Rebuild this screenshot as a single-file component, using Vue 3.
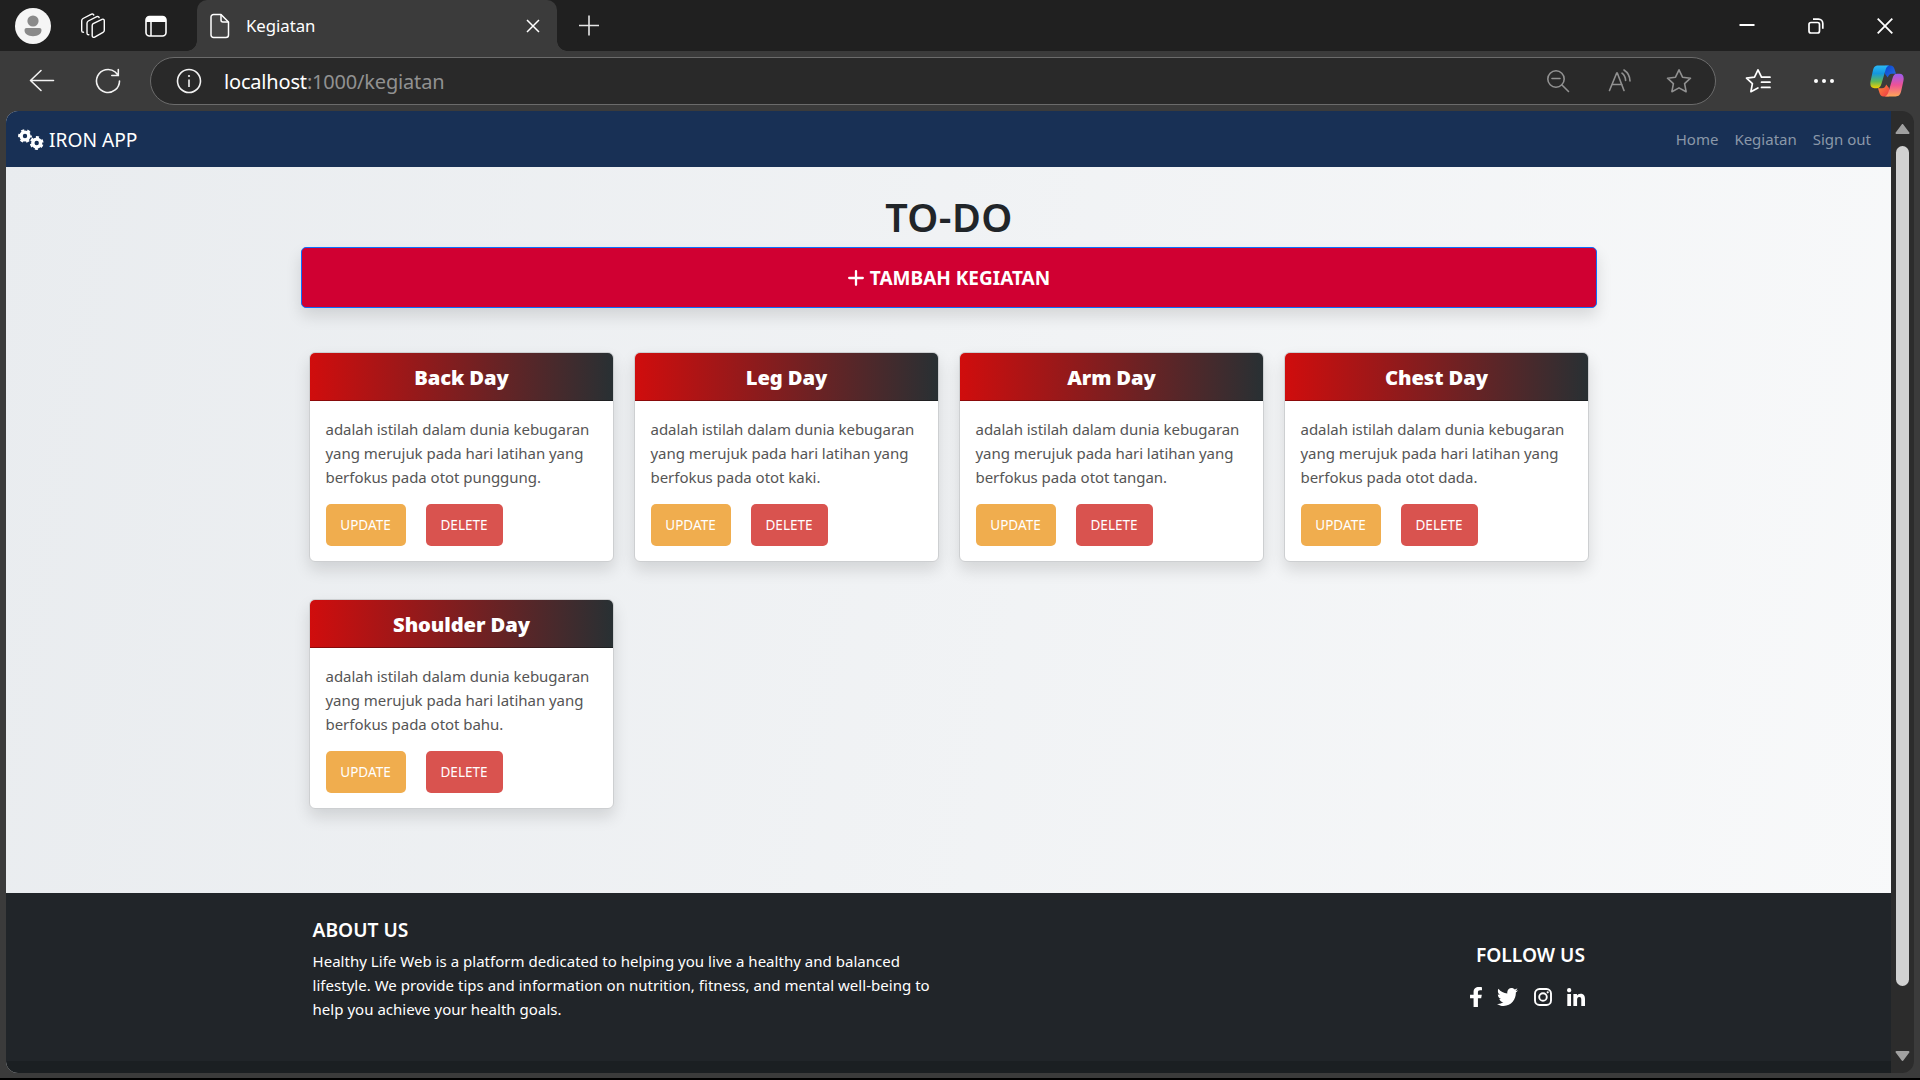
<script setup>
const links = ['Home', 'Kegiatan', 'Sign out']
const cards = [
  { title: 'Back Day', part: 'punggung' },
  { title: 'Leg Day', part: 'kaki' },
  { title: 'Arm Day', part: 'tangan' },
  { title: 'Chest Day', part: 'dada' },
  { title: 'Shoulder Day', part: 'bahu' },
]
</script>

<template>
  <div class="window">
    <header class="tabbar">
      <div class="avatar">
        <svg width="36" height="36" viewBox="0 0 36 36">
          <circle cx="18" cy="18" r="18" fill="#f5f5f5" />
          <circle cx="18" cy="13" r="5.6" fill="#8a8a8a" />
          <path d="M11.500 20h13a2 2 0 0 1 2 2c0 4-3.500 6.200-8.500 6.200S9.500 26 9.500 22a2 2 0 0 1 2-2z" fill="#8a8a8a" />
        </svg>
      </div>
      <svg class="workspaces" width="28" height="28" viewBox="0 0 28 28" fill="none" stroke="#fff" stroke-width="1.400" stroke-linejoin="round" stroke-linecap="round">
        <path d="M14.200 11.600l8.800-4.300c1.200-.5 2.300.1 2.300 1.400v9.600c0 1-.5 1.700-1.300 2.100l-8.300 4.700c-1.300.7-2.500 0-2.500-1.400v-10.300c0-.8.3-1.400 1-1.800z" />
        <path d="M9.800 22.800c-1.100 0-1.800-.6-1.800-1.600v-10c0-1 .4-1.700 1.300-2.200l8.500-4.300c1.100-.5 2-.2 2.300.8" />
        <path d="M4.500 20.300c-1.100 0-1.800-.6-1.800-1.600v-10c0-1 .4-1.700 1.300-2.200l8.500-4.300c1.100-.5 2-.2 2.300.8" />
      </svg>
      <svg class="panel" width="24" height="24" viewBox="0 0 24 24">
        <rect x="2" y="2.500" width="20" height="19.500" rx="3.500" fill="none" stroke="#fff" stroke-width="1.600" />
        <path d="M2 8V6a3.500 3.500 0 0 1 3.500-3.500h13A3.500 3.500 0 0 1 22 6v2z" fill="#fff" />
        <path d="M7 8v14" stroke="#fff" stroke-width="1.500" />
      </svg>
      <div class="tab">
        <svg width="20" height="26" viewBox="0 0 20 26" fill="none" stroke="#fff" stroke-width="1.500" stroke-linejoin="round">
          <path d="M1 4a2.500 2.500 0 0 1 2.500-2.500H11L18.500 9v13a2.500 2.500 0 0 1-2.500 2.500H3.500A2.500 2.500 0 0 1 1 22z" fill="#454545" />
          <path d="M11 1.500V7a2 2 0 0 0 2 2h5.500" />
        </svg>
        <span class="tab-title">Kegiatan</span>
        <svg class="tab-x" width="14" height="14" viewBox="0 0 14 14" stroke="#fff" stroke-width="1.500"><path d="M1 1l12 12M13 1L1 13" /></svg>
      </div>
      <svg class="newtab" width="22" height="22" viewBox="0 0 22 22" stroke="#e6e6e6" stroke-width="1.600"><path d="M11 .5v20M1 10.500h20" /></svg>
      <div class="controls">
        <svg width="16" height="16" viewBox="0 0 16 16" stroke="#fff" stroke-width="2"><path d="M.5 7h15" /></svg>
        <svg width="16" height="16" viewBox="0 0 16 16" fill="none" stroke="#fff" stroke-width="1.700"><rect x="1" y="4.500" width="10.500" height="10.500" rx="2" /><path d="M5 1.200h5.500a4.300 4.300 0 0 1 4.300 4.300v5.300" /></svg>
        <svg width="16" height="16" viewBox="0 0 16 16" stroke="#fff" stroke-width="1.800"><path d="M.7.7l14.600 14.600M15.300.7L.7 15.300" /></svg>
      </div>
    </header>

    <div class="toolbar">
      <svg class="back" width="26" height="24" viewBox="0 0 26 24" fill="none" stroke="#f2f2f2" stroke-width="1.600" stroke-linecap="round" stroke-linejoin="round"><path d="M24.500 11.500H1.500M12 1.500L1.500 11.500 12 21.500" /></svg>
      <svg class="reload" width="26" height="26" viewBox="0 0 26 26" fill="none" stroke="#f2f2f2" stroke-width="1.600" stroke-linecap="round"><path d="M24.500 13A11.500 11.500 0 1 1 20.200 4L23 7M23.300 1.500v6h-6.500" /></svg>
      <div class="address">
        <svg width="26" height="26" viewBox="0 0 26 26" fill="none" stroke="#f2f2f2" stroke-width="1.600"><circle cx="13" cy="13" r="11.500" /><path d="M13 11.500v7.500" /><circle cx="13" cy="8" r="1.100" fill="#f2f2f2" stroke="none" /></svg>
        <span class="url">localhost<span>:1000/kegiatan</span></span>
        <svg class="mag" width="24" height="24" viewBox="0 0 24 24" fill="none" stroke="#919191" stroke-width="1.600" stroke-linecap="round"><circle cx="10" cy="10" r="8.200" /><path d="M16 16l6.500 6.500M6 9.500h8" /></svg>
        <svg class="read" width="24" height="24" viewBox="0 0 24 24" fill="none" stroke="#919191" stroke-width="1.600" stroke-linecap="round"><path d="M1.500 21.500L8.700 4h.6L16 21.500M4 15.500h10M14 4.200c2.300 1.800 3.500 4.200 3.600 7.200M16 1c3.800 2.500 5.900 6.200 6 11" /></svg>
        <svg class="star" width="26" height="26" viewBox="0 0 26 26" fill="none" stroke="#919191" stroke-width="1.600" stroke-linejoin="round"><path d="M13 1.800l3.500 7.400 8 1-5.900 5.500 1.500 8L13 19.900l-7.100 3.800 1.500-8-5.900-5.500 8-1z" /></svg>
      </div>
      <svg class="favs" width="26" height="26" viewBox="0 0 26 26" fill="none" stroke="#fff" stroke-width="1.700" stroke-linejoin="round" stroke-linecap="round"><path d="M16.500 9.200L13 1.800 9.500 9.200l-8 1 5.900 5.500-1.500 8 7-3.800M16.500 9.200h8.500M16.500 14.200H25M16.500 19.400H25" /></svg>
      <svg class="dots" width="22" height="6" viewBox="0 0 22 6" fill="#fff"><circle cx="3" cy="3" r="2" /><circle cx="11" cy="3" r="2" /><circle cx="19" cy="3" r="2" /></svg>
      <svg class="copilot" width="34" height="32" viewBox="0 0 34 32">
        <defs>
          <linearGradient id="cpLeft" x1="0" y1="0" x2="0" y2="1"><stop offset="0" stop-color="#2ab8f5" /><stop offset=".35" stop-color="#1497e0" /><stop offset=".7" stop-color="#5fb85a" /><stop offset="1" stop-color="#f4d000" /></linearGradient>
          <linearGradient id="cpRight" x1="0" y1="0" x2="0" y2="1"><stop offset="0" stop-color="#9a5cf0" /><stop offset=".5" stop-color="#ee5296" /><stop offset="1" stop-color="#ffa657" /></linearGradient>
          <linearGradient id="cpTop" x1="0" y1="0" x2="1" y2="1"><stop offset="0" stop-color="#0a45d0" /><stop offset="1" stop-color="#2a70e0" /></linearGradient>
          <linearGradient id="cpBottom" x1="0" y1="0" x2="1" y2="1"><stop offset="0" stop-color="#ff8a38" /><stop offset="1" stop-color="#ee3a45" /></linearGradient>
        </defs>
        <path d="M15 .6h5.500c2.300 0 3.300 1.300 3.900 3.200l1.600 5h-4c-2.300 0-3.500 1.500-4.200 3.700L15 9z" fill="url(#cpTop)" />
        <path d="M19 31.400h-5.500c-2.300 0-3.300-1.300-3.900-3.200L8 23.200h4c2.300 0 3.500-1.500 4.200-3.700L19 23z" fill="url(#cpBottom)" />
        <path d="M8.500.6h10.600c-2.200.6-3 2.500-3.700 4.900l-4 13.500c-.8 2.700-2 4.200-4.600 4.200H4.500C1 23.200-.3 20.500.6 16L2.800 6C3.600 2.400 5 .6 8.500.6z" fill="url(#cpLeft)" />
        <path d="M25.500 31.400H14.900c2.200-.6 3-2.500 3.700-4.900l4-13.500c.8-2.700 2-4.200 4.600-4.200h2.300c3.500 0 4.800 2.700 3.900 7.200L31.200 26c-.8 3.600-2.200 5.400-5.700 5.400z" fill="url(#cpRight)" />
      </svg>
    </div>

    <div class="viewport">
      <div class="page">
        <nav class="navbar">
          <svg width="26" height="21" viewBox="0 0 26 21">
            <g fill="none" stroke="#fff">
              <circle cx="7" cy="7" r="3.900" stroke-width="3.400" /><circle cx="7" cy="7" r="5.900" stroke-width="2" stroke-dasharray="3.100 3.079" stroke-dashoffset="1.500" />
              <circle cx="18.700" cy="14" r="3.900" stroke-width="3.400" /><circle cx="18.700" cy="14" r="5.900" stroke-width="2" stroke-dasharray="3.100 3.079" stroke-dashoffset="-1.600" />
            </g>
          </svg>
          <span class="brand">IRON APP</span>
          <div class="links"><a v-for="l in links" :key="l">{{ l }}</a></div>
        </nav>

        <main>
          <h1>TO-DO</h1>
          <button class="add">
            <svg width="16" height="16" viewBox="0 0 16 16" stroke="#fff" stroke-width="2.300" stroke-linecap="round"><path d="M8 1.200v13.600M1.200 8h13.600" /></svg>
            <span>TAMBAH KEGIATAN</span>
          </button>
          <div class="grid">
            <article v-for="c in cards" :key="c.title" class="card">
              <h5>{{ c.title }}</h5>
              <div class="body">
                <p>adalah istilah dalam dunia kebugaran<br />yang merujuk pada hari latihan yang<br />berfokus pada otot {{ c.part }}.</p>
                <div class="actions">
                  <button class="update">UPDATE</button>
                  <button class="delete">DELETE</button>
                </div>
              </div>
            </article>
          </div>
        </main>

        <footer>
          <div class="about">
            <h5>ABOUT US</h5>
            <p>Healthy Life Web is a platform dedicated to helping you live a healthy and balanced<br />lifestyle. We provide tips and information on nutrition, fitness, and mental well-being to<br />help you achieve your health goals.</p>
          </div>
          <div class="follow">
            <h5>FOLLOW US</h5>
            <div class="social">
              <svg width="12" height="20" viewBox="22 0 276 512" preserveAspectRatio="none" fill="#fff"><path d="M279.140 288l14.220-92.660h-88.910v-60.130c0-25.350 12.420-50.060 52.240-50.060h40.420V6.260S260.430 0 225.360 0c-73.220 0-121.080 44.380-121.080 124.720v70.620H22.890V288h81.390v224h100.170V288z" /></svg>
              <svg width="21" height="18" viewBox="0 48 512 416" preserveAspectRatio="none" fill="#fff"><path d="M459.370 151.716c.325 4.548.325 9.097.325 13.645 0 138.720-105.583 298.558-298.558 298.558-59.452 0-114.680-17.219-161.137-47.106 8.447.974 16.568 1.299 25.340 1.299 49.055 0 94.213-16.568 130.274-44.832-46.132-.975-84.792-31.188-98.112-72.772 6.498.974 12.995 1.624 19.818 1.624 9.421 0 18.843-1.300 27.614-3.573-48.081-9.747-84.143-51.980-84.143-102.985v-1.299c13.969 7.797 30.214 12.670 47.431 13.319-28.264-18.843-46.781-51.005-46.781-87.391 0-19.492 5.197-37.360 14.294-52.954 51.655 63.675 129.300 105.258 216.365 109.807-1.624-7.797-2.599-15.918-2.599-24.040 0-57.828 46.782-104.934 104.934-104.934 30.213 0 57.502 12.670 76.670 33.137 23.715-4.548 46.456-13.320 66.599-25.340-7.798 24.366-24.366 44.833-46.132 57.827 21.117-2.273 41.584-8.122 60.426-16.243-14.292 20.791-32.161 39.308-52.628 54.253z" /></svg>
              <svg width="18" height="18" viewBox="0 0 18 18" fill="none" stroke="#fff" stroke-width="1.900"><rect x="1" y="1" width="16" height="16" rx="4.500" /><circle cx="9" cy="9" r="3.800" /><circle cx="13.700" cy="4.300" r="1.100" fill="#fff" stroke="none" /></svg>
              <svg width="18" height="18" viewBox="0 0 448 448" fill="#fff"><path d="M100.280 448H7.400V148.900h92.880zM53.790 108.100C24.090 108.100 0 83.500 0 53.800a53.790 53.790 0 0 1 107.580 0c0 29.700-24.100 54.300-53.790 54.300zM447.900 448h-92.680V302.400c0-34.700-.7-79.200-48.290-79.200-48.290 0-55.690 37.700-55.690 76.700V448h-92.780V148.900h89.080v40.800h1.300c12.400-23.500 42.690-48.300 87.880-48.300 94 0 111.280 61.900 111.280 142.300V448z" /></svg>
            </div>
          </div>
        </footer>
        <div class="copy-strip"></div>
      </div>
      <div class="scrollbar">
        <svg width="15" height="11" viewBox="0 0 15 11"><path d="M7.500 1L13.500 9h-12z" fill="#a0a0a0" stroke="#a0a0a0" stroke-width="2" stroke-linejoin="round" /></svg>
        <div class="thumb"></div>
        <svg width="15" height="11" viewBox="0 0 15 11"><path d="M7.500 9L13.500 1h-12z" fill="#a0a0a0" stroke="#a0a0a0" stroke-width="2" stroke-linejoin="round" /></svg>
      </div>
    </div>
    <div class="taskbar-edge"></div>
  </div>
</template>

<style>
body { margin: 0; background: #000; overflow: hidden; }
</style>

<style scoped>
* { box-sizing: border-box; }
h1, h5, p { margin: 0; }
button { font: inherit; margin: 0; }
svg { display: block; flex: none; }
.window { width: 1920px; height: 1080px; display: flex; flex-direction: column; background: #3b3b3b; font-family: "Noto Sans", "Open Sans", sans-serif; overflow: hidden; }
.tabbar { height: 51px; flex: none; background: #202020; display: flex; align-items: center; }
.avatar { margin-left: 15px; }
.workspaces { margin-left: 28px; }
.panel { margin-left: 37px; }
.tab { position: relative; margin-left: 29px; width: 360px; height: 51px; background: #3b3b3b; border-radius: 10px 10px 0 0; display: flex; align-items: center; padding: 0 17px 0 13px; }
.tab::before, .tab::after { content: ""; position: absolute; bottom: 0; width: 10px; height: 10px; }
.tab::before { left: -10px; background: radial-gradient(circle at 0 0, transparent 9.500px, #3b3b3b 10px); }
.tab::after { right: -10px; background: radial-gradient(circle at 100% 0, transparent 9.500px, #3b3b3b 10px); }
.tab-title { margin-left: 16px; color: #fff; font-size: 16.800px; letter-spacing: -0.05px; }
.tab-x { margin-left: auto; }
.newtab { margin-left: 21px; }
.controls { margin-left: auto; margin-right: 27px; display: flex; gap: 53px; }
.toolbar { height: 60px; flex: none; display: flex; align-items: center; }
.back { margin-left: 29px; }
.reload { margin-left: 40px; }
.address { margin-left: 29px; width: 1566px; height: 48px; border: 1px solid #6b6b6b; border-radius: 24px; background: #292929; display: flex; align-items: center; padding: 0 23px 0 25px; }
.url { margin-left: 22px; font-size: 20px; letter-spacing: -0.18px; color: #fff; white-space: nowrap; }
.url span { color: #919191; }
.mag { margin-left: auto; }
.read { margin-left: 38px; }
.star { margin-left: 34px; }
.favs { margin-left: 29px; }
.dots { margin-left: 42px; }
.copilot { margin-left: 35px; }
.viewport { height: 962px; flex: none; margin: 0 6px; display: flex; border-radius: 12px; overflow: hidden; }
.page { width: 1885px; display: flex; flex-direction: column; background: linear-gradient(100deg, #e9ecef, #f8f9fa); }
.navbar { height: 56px; flex: none; background: #183055; display: flex; align-items: center; padding: 0 20px 0 12px; }
.brand { margin-left: 5px; padding-top: 1px; color: #fff; font-size: 19.200px; }
.links { margin-left: auto; display: flex; gap: 16px; color: #8b98a9; font-size: 15px; }
main { flex: 1; display: flex; flex-direction: column; padding: 26px 294px 0 295px; }
h1 { height: 48px; line-height: 48px; font-size: 39.500px; font-weight: 600; letter-spacing: 0.400px; color: #212529; text-align: center; }
.add { margin-top: 6px; height: 61px; border: 1px solid #0d6efd; border-radius: 5px; background: #d00032; color: #fff; font-size: 19px; font-weight: 700; display: flex; align-items: center; justify-content: center; gap: 6px; box-shadow: 0 8px 16px rgba(0, 0, 0, .12); }
.grid { display: grid; grid-template-columns: repeat(4, 305px); gap: 37px 20px; margin: 44px 0 0 8px; }
.card { height: 210px; background: #fff; border: 1px solid #cdcfd1; border-radius: 6px; overflow: hidden; box-shadow: 0 8px 16px rgba(0, 0, 0, .12); }
.card h5 { height: 48px; line-height: 48px; background: linear-gradient(to right, #d00d0d, #283033); border-bottom: 1px solid rgba(0, 0, 0, .3); color: #fff; font-size: 20.200px; font-weight: 900; letter-spacing: -0.1px; text-align: center; }
.body { padding: 16px 15.500px; }
.card p { color: #555; font-size: 15px; letter-spacing: -0.040px; line-height: 24px; white-space: nowrap; }
.actions { display: flex; gap: 20px; margin-top: 15px; }
.actions button { height: 42px; border: 0; border-radius: 5px; padding: 0; color: #fff; font-size: 13.500px; }
.update { width: 80px; background: #f0ad4e; }
.delete { width: 77px; background: #d9534f; }
footer { height: 168px; flex: none; background: #212529; color: #fff; display: flex; justify-content: space-between; padding: 25px 306px 0 306.500px; }
footer h5 { font-size: 19.200px; font-weight: 600; line-height: 24px; }
.about p { margin-top: 7px; font-size: 15px; letter-spacing: 0.030px; line-height: 24px; white-space: nowrap; }
.follow { display: flex; flex-direction: column; align-items: flex-end; padding-top: 25px; }
.social { display: flex; gap: 15.500px; align-items: center; margin-top: 20px; }
.copy-strip { height: 12px; flex: none; background: #1b1f22; }
.scrollbar { width: 23px; background: #2c2c2c; display: flex; flex-direction: column; align-items: center; padding: 13px 0 11px; }
.thumb { width: 13px; height: 840px; margin: 11px 0 auto; border-radius: 7px; background: #d1d1d1; }
.taskbar-edge { height: 2px; margin-top: auto; background: #000; flex: none; }
</style>
